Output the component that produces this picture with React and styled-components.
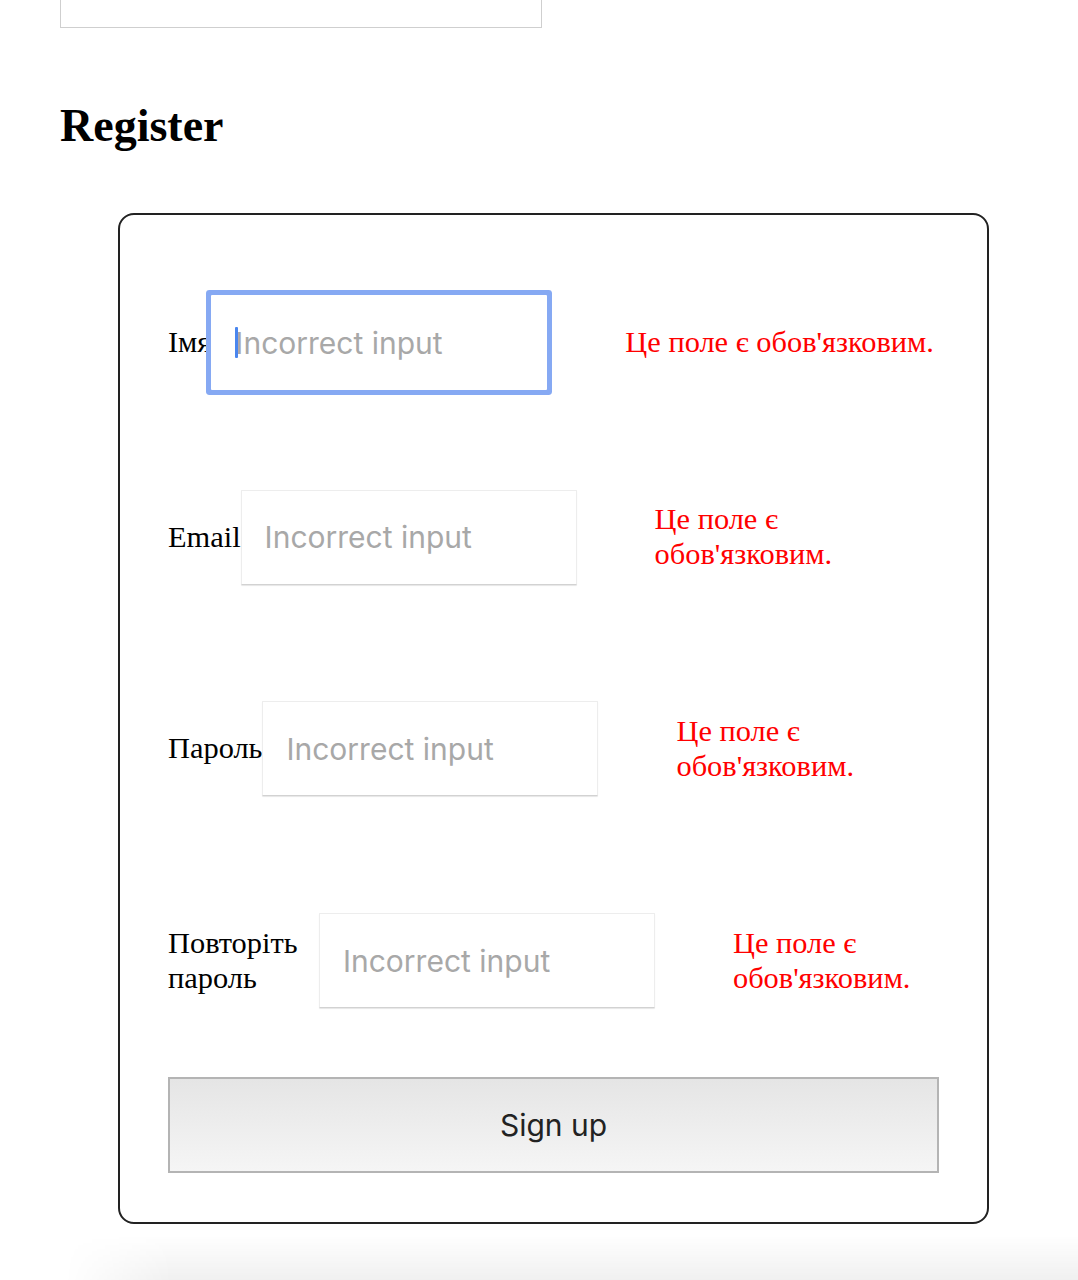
import React from "react";
import styled, { createGlobalStyle } from "styled-components";

const Global = createGlobalStyle`
  html, body { margin: 0; padding: 0; background: #fff; }
  body { overflow: hidden; font-family: "Liberation Serif", "Times New Roman", serif; color: #000; }
`;

const Page = styled.div`
  padding: 0 60px;
  height: 1280px;
  box-sizing: border-box;
  display: flex;
  flex-direction: column;
`;

const TopBox = styled.div`
  width: 482px;
  height: 48px;
  margin-top: -20px;
  box-sizing: border-box;
  border: 1px solid #cfcfcf;
  flex-shrink: 0;
`;

const Title = styled.h2`
  margin: 71px 0 0;
  font-size: 46px;
  line-height: 53px;
  font-weight: bold;
`;

const Card = styled.form`
  margin: 61px 0 0 58px;
  width: 871px;
  box-sizing: border-box;
  border: 2px solid #222;
  border-radius: 16px;
  padding: 80px 48px 49px;
  display: flex;
  flex-direction: column;
`;

const Rows = styled.div`
  display: flex;
  flex-direction: column;
  gap: 81px;
`;

const Row = styled.div`
  display: flex;
  align-items: center;
`;

const Label = styled.label`
  font-size: 30.4px;
  line-height: 35px;
`;

const Field = styled.div`
  position: relative;
  flex-shrink: 0;
  width: 336px;
  height: 95px;
`;

const Input = styled.input`
  width: 100%;
  height: 100%;
  box-sizing: border-box;
  padding: 0 23px;
  margin: 0;
  font-family: Inter, "Liberation Sans", sans-serif;
  font-size: 30px;
  color: #333;
  background: #fff;
  border: 1px solid ${(p) => (p.$focused ? "transparent" : "#ededed")};
  border-bottom-color: ${(p) => (p.$focused ? "transparent" : "#d2d2d2")};
  border-radius: 1px;
  box-shadow: ${(p) =>
    p.$focused ? "0 0 0 5px #86a9f3" : "0 1px 1px rgba(0,0,0,0.10)"};
  outline: none;
  &::placeholder { color: #a8a8a8; opacity: 1; }
`;

const Caret = styled.span`
  position: absolute;
  left: 24px;
  top: 32px;
  width: 3px;
  height: 31px;
  border-radius: 1px;
  background: #4a86ee;
`;

const Error = styled.p`
  margin: 30.4px 0 30.4px 78px;
  font-size: 30.4px;
  line-height: 35px;
  color: #ff0000;
`;

const Button = styled.button`
  margin-top: 51px;
  width: 100%;
  height: 96px;
  box-sizing: border-box;
  border: 2px solid #b4b4b4;
  background: linear-gradient(to bottom, #e5e5e5, #f5f5f5);
  font-family: Inter, "Liberation Sans", sans-serif;
  font-size: 30px;
  color: #222;
  padding: 0;
`;

const BottomShade = styled.div`
  margin: auto -60px 0;
  height: 45px;
  flex-shrink: 0;
  background: linear-gradient(to bottom, rgba(0,0,0,0), rgba(0,0,0,0.06));
  -webkit-mask-image: linear-gradient(to right, transparent 6%, black 16%);
  mask-image: linear-gradient(to right, transparent 6%, black 16%);
`;

const fields = [
  { label: "Імя", type: "text", focused: true },
  { label: "Email", type: "email" },
  { label: "Пароль", type: "password" },
  { label: "Повторіть пароль", type: "password" },
];

export default function App() {
  return (
    <>
      <Global />
      <Page>
        <TopBox />
        <Title>Register</Title>
        <Card onSubmit={(e) => e.preventDefault()}>
          <Rows>
            {fields.map((f) => (
              <Row key={f.label}>
                <Label>{f.label}</Label>
                <Field>
                  <Input
                    type={f.type}
                    placeholder="Incorrect input"
                    $focused={f.focused}
                    readOnly
                  />
                  {f.focused && <Caret />}
                </Field>
                <Error>Це поле є обов'язковим.</Error>
              </Row>
            ))}
          </Rows>
          <Button type="submit">Sign up</Button>
        </Card>
        <BottomShade />
      </Page>
    </>
  );
}
